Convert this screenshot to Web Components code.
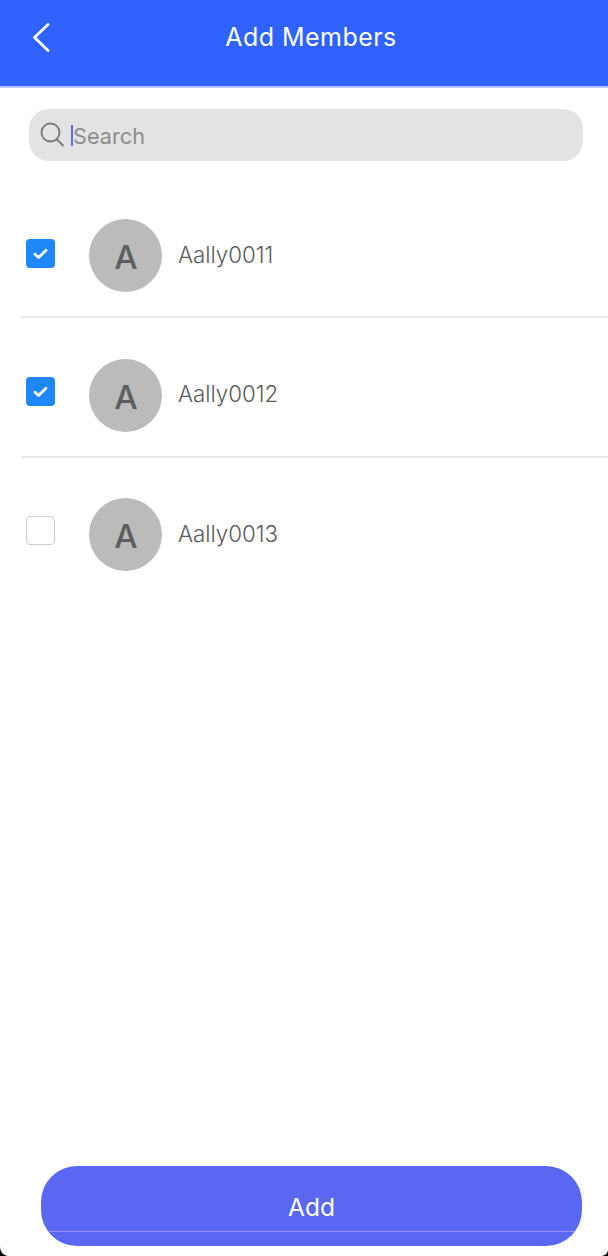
<!DOCTYPE html>
<html>
<head>
<meta charset="utf-8">
<title>Add Members</title>
<style>
  html, body { margin: 0; padding: 0; background: #000; }
</style>
</head>
<body>
<add-members-screen>
  <app-header slot="header" title="Add Members"></app-header>
  <search-box slot="search" placeholder="Search"></search-box>
  <member-row name="Aally0011" checked style="--check-lift: 4px; --name-lift: 2px"></member-row>
  <member-row name="Aally0012" checked style="--check-lift: 8px; --name-lift: 4px"></member-row>
  <member-row name="Aally0013" last style="--check-lift: 8px; --name-lift: 2px; --row-top: 40px"></member-row>
  <add-button slot="footer">Add</add-button>
</add-members-screen>

<script>
class AddMembersScreen extends HTMLElement {
  connectedCallback() {
    this.attachShadow({ mode: 'open' });
    this.shadowRoot.innerHTML = `
      <style>
        :host {
          display: flex;
          flex-direction: column;
          width: 608px;
          height: 1256px;
          background: #fff;
          border-radius: 0 0 7px 8px / 0 0 6px 9px;
          overflow: hidden;
          font-family: Inter, 'Liberation Sans', sans-serif;
        }
        .list { flex: 1; display: flex; flex-direction: column; }
      </style>
      <slot name="header"></slot>
      <slot name="search"></slot>
      <div class="list"><slot></slot></div>
      <slot name="footer"></slot>
    `;
  }
}

class AppHeader extends HTMLElement {
  connectedCallback() {
    this.attachShadow({ mode: 'open' });
    this.shadowRoot.innerHTML = `
      <style>
        :host {
          display: grid;
          grid-template-columns: 1fr auto 1fr;
          align-items: center;
          height: 86px;
          padding: 0 0 0 14px;
          background: #2f62ff;
          border-bottom: 2px solid #b4c3f2;
          color: #fff;
          font-size: 25px;
          line-height: 30px;
        }
        svg { display: block; margin: 0 0 11px 17px; }
        .title { margin-bottom: 12px; letter-spacing: 0.45px; }
      </style>
      <svg width="20" height="32" viewBox="0 0 20 32" fill="none">
        <path d="M17 2.5 L3.5 15.5 L17 28.5" stroke="#fff" stroke-width="2.8" stroke-linecap="round" stroke-linejoin="round"/>
      </svg>
      <div class="title">${this.getAttribute('title')}</div>
      <div></div>
    `;
  }
}

class SearchBox extends HTMLElement {
  connectedCallback() {
    this.attachShadow({ mode: 'open' });
    this.shadowRoot.innerHTML = `
      <style>
        :host {
          display: flex;
          align-items: center;
          height: 52px;
          margin: 21px 25px 17px 29px;
          padding-left: 11px;
          background: #e3e3e3;
          border-radius: 20px;
          color: #8d8d8d;
          font-size: 21.7px;
        }
        svg { display: block; flex: none; }
        .caret { width: 2px; height: 21px; margin: 0 1px 0 6px; background: #5f69ee; }
        .text { padding-top: 2px; margin-left: -1px; }
      </style>
      <svg width="25" height="26" viewBox="0 0 25 26" fill="none" stroke="#7c7775" stroke-width="1.8">
        <circle cx="10.5" cy="10.5" r="9"/>
        <path d="M17 17.5 L23 23.5" stroke-linecap="round"/>
      </svg>
      <span class="caret"></span>
      <span class="text">${this.getAttribute('placeholder')}</span>
    `;
  }
}

class CheckBox extends HTMLElement {
  connectedCallback() {
    this.attachShadow({ mode: 'open' });
    const on = this.hasAttribute('checked');
    this.shadowRoot.innerHTML = `
      <style>
        :host {
          display: flex;
          align-items: center;
          justify-content: center;
          box-sizing: border-box;
          width: 29px;
          height: 29px;
          border-radius: 4px;
          background: ${on ? '#1e88fb' : '#fff'};
          border: ${on ? 'none' : '1.5px solid #cfcfcf'};
        }
      </style>
      ${on ? `<svg width="15" height="12" viewBox="0 0 15 12" fill="none">
        <path d="M2 6.2 L5.6 9.6 L13 2.2" stroke="#fff" stroke-width="2.8" stroke-linecap="round" stroke-linejoin="round"/>
      </svg>` : ''}
    `;
  }
}

class MemberRow extends HTMLElement {
  connectedCallback() {
    this.attachShadow({ mode: 'open' });
    const name = this.getAttribute('name');
    const checked = this.hasAttribute('checked') ? 'checked' : '';
    this.shadowRoot.innerHTML = `
      <style>
        :host {
          display: flex;
          align-items: center;
          margin-left: 21px;
          padding: var(--row-top, 41px) 0 24px 5px;
          border-bottom: 2px solid ${this.hasAttribute('last') ? 'transparent' : '#e8e8e8'};
        }
        check-box { margin: 0 34px var(--check-lift, 4px) 0; }
        .avatar {
          display: flex;
          align-items: center;
          justify-content: center;
          width: 73px;
          height: 73px;
          border-radius: 50%;
          background: #bbb;
          color: #5e5e5e;
          font-size: 33px;
          font-weight: 500;
          padding: 2px 0 0 1px;
          box-sizing: border-box;
        }
        .name {
          margin: 0 0 var(--name-lift, 2px) 16px;
          color: #5c5c5c;
          font-size: 22.3px;
          font-weight: 300;
        }
      </style>
      <check-box ${checked}></check-box>
      <div class="avatar">${name[0]}</div>
      <div class="name">${name}</div>
    `;
  }
}

class AddButton extends HTMLElement {
  connectedCallback() {
    this.attachShadow({ mode: 'open' });
    this.shadowRoot.innerHTML = `
      <style>
        :host {
          position: relative;
          display: flex;
          align-items: center;
          justify-content: center;
          height: 80px;
          margin: 0 26px 10px 41px;
          padding-top: 2px;
          box-sizing: border-box;
          background: #5b67f1;
          border-radius: 36px;
          color: #fff;
          font-size: 24.5px;
          overflow: hidden;
        }
        :host::after {
          content: "";
          position: absolute;
          left: 7px;
          right: 7px;
          top: 65px;
          height: 1px;
          background: #8c93f7;
        }
      </style>
      <slot></slot>
    `;
  }
}

customElements.define('add-members-screen', AddMembersScreen);
customElements.define('app-header', AppHeader);
customElements.define('search-box', SearchBox);
customElements.define('check-box', CheckBox);
customElements.define('member-row', MemberRow);
customElements.define('add-button', AddButton);
</script>
</body>
</html>
